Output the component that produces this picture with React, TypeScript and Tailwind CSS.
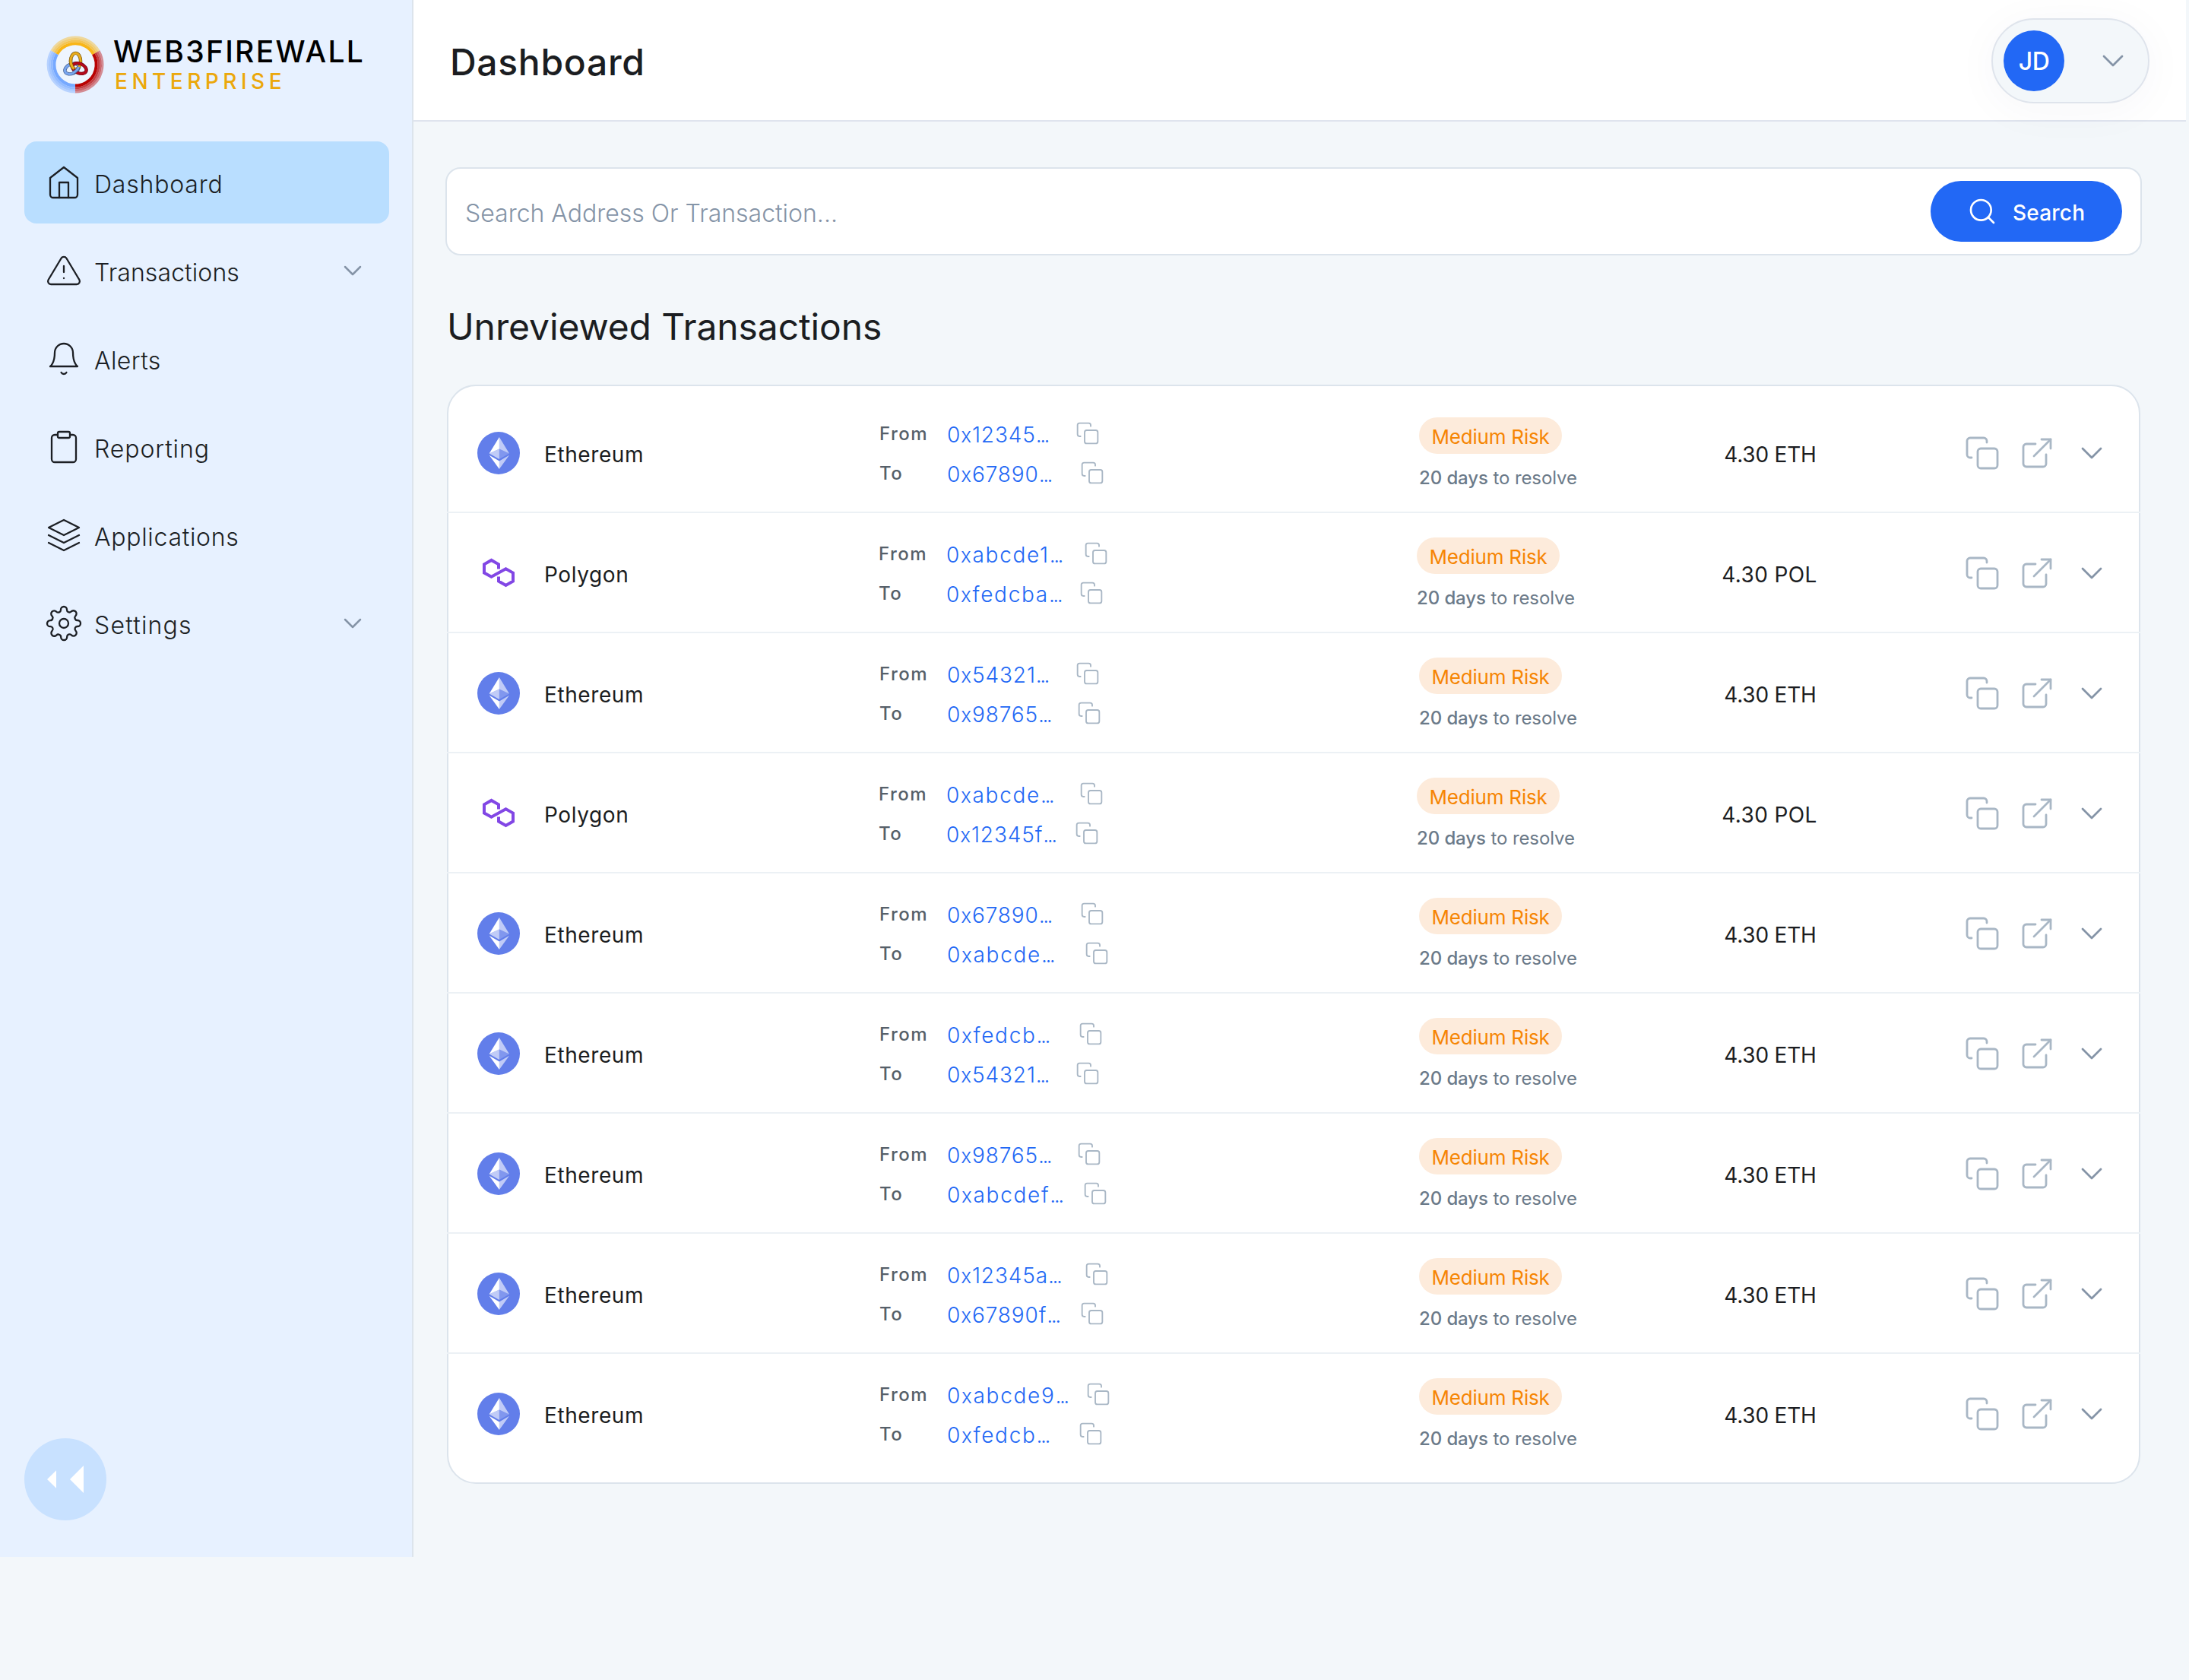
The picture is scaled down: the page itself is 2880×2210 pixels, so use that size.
import {
    FiAlertTriangle,
    FiBell,
    FiChevronDown,
    FiClipboard,
    FiCopy,
    FiExternalLink,
    FiHome,
    FiLayers,
    FiSearch,
    FiSettings,
} from "react-icons/fi";
import type { IconType } from "react-icons";

interface INavItem {
    label: string;
    icon: IconType;
    tracking: string;
    active?: boolean;
    expandable?: boolean;
}

interface IAddress {
    value: string;
    width: number;
}

interface ITransaction {
    id: number;
    chain: "Ethereum" | "Polygon";
    from: IAddress;
    to: IAddress;
}

const navItems: INavItem[] = [
    { label: "Dashboard", icon: FiHome, tracking: "tracking-[0.8px]", active: true },
    { label: "Transactions", icon: FiAlertTriangle, tracking: "tracking-[0.1px]", expandable: true },
    { label: "Alerts", icon: FiBell, tracking: "tracking-[0.4px]" },
    { label: "Reporting", icon: FiClipboard, tracking: "tracking-[0.9px]" },
    { label: "Applications", icon: FiLayers, tracking: "tracking-[0.7px]" },
    { label: "Settings", icon: FiSettings, tracking: "tracking-[1.2px]", expandable: true },
];

const transactions: ITransaction[] = [
    { id: 1, chain: "Ethereum", from: { value: "12345", width: 169 }, to: { value: "67890", width: 175 } },
    { id: 2, chain: "Polygon", from: { value: "abcde1", width: 181 }, to: { value: "fedcba", width: 175 } },
    { id: 3, chain: "Ethereum", from: { value: "54321", width: 169 }, to: { value: "98765", width: 171 } },
    { id: 4, chain: "Polygon", from: { value: "abcde", width: 175 }, to: { value: "12345f", width: 169 } },
    { id: 5, chain: "Ethereum", from: { value: "67890", width: 175 }, to: { value: "abcde", width: 181 } },
    { id: 6, chain: "Ethereum", from: { value: "fedcb", width: 173 }, to: { value: "54321", width: 169 } },
    { id: 7, chain: "Ethereum", from: { value: "98765", width: 171 }, to: { value: "abcdef", width: 179 } },
    { id: 8, chain: "Ethereum", from: { value: "12345a", width: 181 }, to: { value: "67890f", width: 175 } },
    { id: 9, chain: "Ethereum", from: { value: "abcde9", width: 183 }, to: { value: "fedcb", width: 173 } },
];

const logoRings = [
    { r: 27.6, width: 4, opacity: 1 },
    { r: 31, width: 2.8, opacity: 0.75 },
    { r: 33.7, width: 2.6, opacity: 0.58 },
    { r: 36.2, width: 2.4, opacity: 0.42 },
];

const LogoMark = () => (
    <svg className="w-[76px] h-[76px]" viewBox="0 0 76 76" fill="none">
        <circle cx="38" cy="38" r="27" fill="#eef5fe" />
        {logoRings.map(({ r, width, opacity }) => (
            <g key={r} strokeWidth={width} opacity={opacity}>
                <circle cx="38" cy="38" r={r} stroke="#f9b618" pathLength={3} strokeDasharray="1 2" transform="rotate(210 38 38)" />
                <circle cx="38" cy="38" r={r} stroke="#b90202" pathLength={3} strokeDasharray="1 2" transform="rotate(-30 38 38)" />
                <circle cx="38" cy="38" r={r} stroke="#76a9ff" pathLength={3} strokeDasharray="1 2" transform="rotate(90 38 38)" />
            </g>
        ))}
        {/* Interlocked rings */}
        <ellipse cx="33.5" cy="43.5" rx="9.6" ry="6.2" stroke="#46608f" strokeWidth="4.4" transform="rotate(-24 33.5 43.5)" />
        <ellipse cx="33.5" cy="43.5" rx="9.6" ry="6.2" stroke="#78a5ee" strokeWidth="3" transform="rotate(-24 33.5 43.5)" />
        <ellipse cx="38.5" cy="33.5" rx="6.6" ry="10.6" stroke="#7c5a10" strokeWidth="4.4" />
        <ellipse cx="38.5" cy="33.5" rx="6.6" ry="10.6" stroke="#e9ac1c" strokeWidth="3" />
        <ellipse cx="43.5" cy="43" rx="9.6" ry="6.2" stroke="#6d0714" strokeWidth="4.4" transform="rotate(24 43.5 43)" />
        <ellipse cx="43.5" cy="43" rx="9.6" ry="6.2" stroke="#b5081a" strokeWidth="3" transform="rotate(24 43.5 43)" />
        <path d="M32.2 30c-.8 5 .6 11 4 13.4" stroke="#7c5a10" strokeWidth="4.4" />
        <path d="M32.2 29.6c-.8 5 .6 11.4 4.2 14" stroke="#e9ac1c" strokeWidth="3" />
        <path d="M35 49c3.5-1.8 6.6-4.6 7.4-8" stroke="#46608f" strokeWidth="4.4" />
        <path d="M34.8 49.1c3.6-1.8 6.8-4.6 7.6-8.3" stroke="#78a5ee" strokeWidth="3" />
    </svg>
);

const EthereumIcon = () => (
    <svg className="w-14 h-14" viewBox="0 0 56 56">
        <circle cx="28" cy="28" r="28" fill="#627eea" />
        <path d="M28.9 7v15.5L42 28.4z" fill="#fff" fillOpacity=".6" />
        <path d="M28.9 7L15.7 28.4l13.2-5.9z" fill="#fff" />
        <path d="M28.9 38.5V49L42 30.8z" fill="#fff" fillOpacity=".6" />
        <path d="M28.9 49V38.5l-13.2-7.7z" fill="#fff" />
        <path d="M28.9 36.1L42 28.4l-13.1-5.9z" fill="#fff" fillOpacity=".2" />
        <path d="M15.7 28.4l13.2 7.7V22.5z" fill="#fff" fillOpacity=".6" />
    </svg>
);

const PolygonIcon = () => (
    <svg className="w-14 h-14" viewBox="0 0 56 56" fill="none" stroke="#8247e5" strokeWidth="4">
        <path d="M28 22.5v-6.2l-9.5-5.4L9 16.3v11.2l9.5 5.3L37.5 22.3l9.5 5.3v11l-9.5 5.4L28 38.6v-6.2" />
    </svg>
);

const Sidebar = () => (
    <aside className="flex h-[2048px] w-[544px] shrink-0 flex-col border-r-2 border-[#dce4ec] bg-[#e7f1ff] px-8 pb-12">
        <div className="flex h-[186px] items-start gap-3 pl-[29px] pt-[47px]">
            <LogoMark />
            <div className="flex flex-col pt-[1px]">
                <span className="text-[39px] leading-10 font-medium tracking-[2.3px] text-black">WEB3FIREWALL</span>
                <span className="pl-[2px] pt-px text-[28px] leading-9 font-medium tracking-[5.5px] text-[#eba80c]">ENTERPRISE</span>
            </div>
        </div>

        <nav className="flex flex-1 flex-col gap-2">
            {navItems.map(({ label, icon: Icon, tracking, active, expandable }) => (
                <a
                    key={label}
                    href="#"
                    className={`flex h-[108px] w-[480px] items-center rounded-2xl pl-7 pr-7 text-[#1c1f24] ${active ? "bg-[#b9deff]" : ""}`}
                >
                    <Icon size={48} strokeWidth={1.15} />
                    <span className={`ml-4 flex-1 pt-1.5 text-[32px] leading-10 font-light ${tracking}`}>{label}</span>
                    {expandable && <FiChevronDown size={40} strokeWidth={1.5} className="text-[#8594a7]" />}
                </a>
            ))}
        </nav>

        {/* Collapse button */}
        <button className="flex size-[108px] items-center justify-center rounded-full bg-[#c8e1ff]" aria-label="Collapse sidebar">
            <svg className="w-12 h-9" viewBox="0 0 48 36" fill="#fff">
                <path d="M12 6.2v23.6L0 18zM48 0v36L30 18z" />
            </svg>
        </button>
    </aside>
);

const Header = () => (
    <header className="mr-1 flex h-40 items-center justify-between border-b-2 border-[#dfe4ee] bg-white pl-12 pr-12 pt-0.5">
        <h1 className="pt-1 text-[48px] leading-[60px] font-medium tracking-[0.7px] text-[#1b1d21]">Dashboard</h1>
        <button className="flex h-28 w-52 items-center justify-between rounded-full border-2 border-[#dfe4ec] bg-[#f3f7fa] pl-[14px] pr-[22px] shadow-[0_8px_60px_rgba(60,50,90,0.04)]">
            <span className="flex size-20 items-center justify-center rounded-full bg-[#2268f5] pt-[2px] text-[32px] font-medium tracking-[-0.5px] text-white">
                JD
            </span>
            <FiChevronDown size={48} strokeWidth={1.4} className="text-[#8594a7]" />
        </button>
    </header>
);

const SearchBar = () => (
    <div className="flex h-[116px] items-center justify-between rounded-[20px] border-2 border-[#dce4ec] bg-white pl-6 pr-6">
        <span className="pt-1.5 text-[32px] leading-10 font-light text-[#8594a7]">Search Address Or Transaction...</span>
        <button className="flex h-20 w-[252px] items-center rounded-full bg-[#2268f5] pl-12 text-white">
            <FiSearch size={40} strokeWidth={1.6} />
            <span className="ml-5 pt-[3px] text-[28px] font-medium tracking-[0.2px]">Search</span>
        </button>
    </div>
);

const AddressLine = ({ label, address }: { label: string; address: IAddress }) => {
    // Letters set narrower than digits, so they get looser tracking
    const isNumeric = /^\d/.test(address.value);

    return (
        <div className="flex h-[52px] items-center">
            <span className="w-[89px] pt-px text-[24px] font-medium tracking-[1.5px] text-[#566069]">{label}</span>
            <span
                className={`pt-1 text-[28px] leading-9 font-light whitespace-nowrap text-[#2268f5] [font-feature-settings:'calt'_0] ${isNumeric ? "tracking-[0.9px]" : "tracking-[1.7px]"}`}
                style={{ width: address.width }}
            >
                0<span className="text-[26px]">x</span>{address.value}
                <span className="tracking-[-2.5px]">...</span>
            </span>
            <FiCopy size={32} strokeWidth={1.4} className="text-[#a9b7c5]" />
        </div>
    );
};

const TransactionRow = ({ tx }: { tx: ITransaction }) => {
    const isEthereum = tx.chain === "Ethereum";

    return (
        <li className="-mx-0.5 flex h-[158px] items-center border-b-2 border-[#ecf1f5] pl-10 pr-10 pt-0.5 last:border-transparent">
            <div className={`flex items-center gap-8 ${isEthereum ? "w-[529px]" : "w-[528px]"}`}>
                {isEthereum ? <EthereumIcon /> : <PolygonIcon />}
                <span className="pt-1 text-[28px] leading-9 tracking-[0.6px] text-[#1b1d21]">{tx.chain}</span>
            </div>

            <div className={isEthereum ? "w-[710px]" : "w-[708px]"}>
                <AddressLine label="From" address={tx.from} />
                <AddressLine label="To" address={tx.to} />
            </div>

            <div className={`flex flex-col items-start gap-1 pt-1 ${isEthereum ? "w-[342px]" : "w-[344px]"}`}>
                <span className="flex h-12 w-[188px] items-center justify-center rounded-full bg-[#fdebdb] pt-0.5 text-[26px] tracking-[-0.2px] whitespace-nowrap text-[#f68503]">
                    Medium Risk
                </span>
                <span className="pt-2.5 text-[24px] leading-9 tracking-[-0.1px] whitespace-nowrap text-[#6b7a89]">
                    <span className="font-medium">20 days</span> to resolve
                </span>
            </div>

            <span
                className={`w-60 pt-1 text-center text-[28px] leading-9 text-[#1b1d21] ${isEthereum ? "tracking-[-0.2px]" : "tracking-[0.4px]"}`}
            >
                4.30 {isEthereum ? "ETH" : "POL"}
            </span>

            <div className="ml-auto flex gap-6 text-[#a9b7c5]">
                <FiCopy size={48} strokeWidth={1.4} />
                <FiExternalLink size={48} strokeWidth={1.4} />
                <FiChevronDown size={48} strokeWidth={1.4} className="text-[#8594a7]" />
            </div>
        </li>
    );
};

export default function App() {
    return (
        <div className="flex h-[2210px] w-[2880px] items-start overflow-hidden bg-[#f3f7fa] font-[Inter,sans-serif]">
            <Sidebar />
            <div className="flex flex-1 flex-col">
                <Header />
                <main className="pt-[60px] pl-[42px] pr-[62px]">
                    <SearchBar />
                    <div className="px-0.5">
                        <h2 className="pt-16 text-[48px] leading-[60px] tracking-[-0.1px] text-[#1b1d21]">Unreviewed Transactions</h2>
                        <ul className="mt-[46px] rounded-[38px] border-2 border-[#dce4ec] bg-white pt-[9px] pb-[11px]">
                            {transactions.map((tx) => (
                                <TransactionRow key={tx.id} tx={tx} />
                            ))}
                        </ul>
                    </div>
                </main>
            </div>
        </div>
    );
}
